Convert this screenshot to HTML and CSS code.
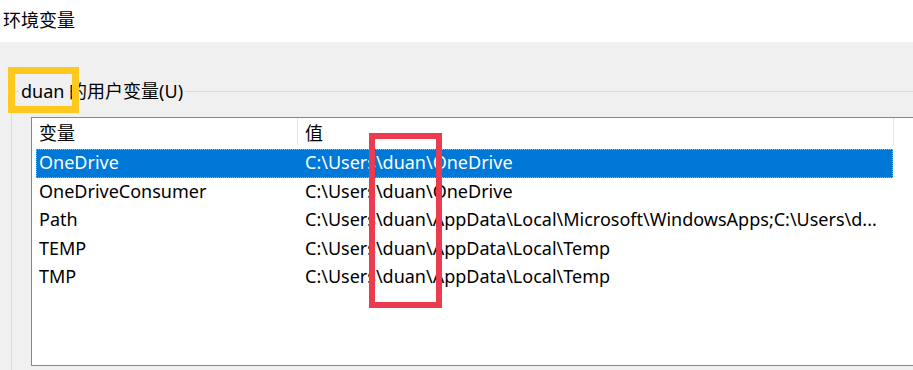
FILE: index.html
```html
<!DOCTYPE html>
<html lang="zh-CN">
<head>
<meta charset="utf-8">
<title>环境变量</title>
<link rel="stylesheet" href="styles.css">
</head>
<body>
<div class="titlebar">环境变量</div>
<div class="main">
  <div class="group">
    <div class="group-label">duan 的用户变量(U)</div>
    <div class="listbox">
      <div class="header">
        <div class="hcell c1">变量</div>
        <div class="hcell c2">值</div>
      </div>
      <div class="row selected"><div class="cell c1">OneDrive</div><div class="cell c2">C:\Users\duan\OneDrive</div></div>
      <div class="row"><div class="cell c1">OneDriveConsumer</div><div class="cell c2">C:\Users\duan\OneDrive</div></div>
      <div class="row"><div class="cell c1">Path</div><div class="cell c2">C:\Users\duan\AppData\Local\Microsoft\WindowsApps;C:\Users\d...</div></div>
      <div class="row"><div class="cell c1">TEMP</div><div class="cell c2">C:\Users\duan\AppData\Local\Temp</div></div>
      <div class="row"><div class="cell c1">TMP</div><div class="cell c2">C:\Users\duan\AppData\Local\Temp</div></div>
    </div>
  </div>
</div>
<div class="mark-yellow"></div>
<div class="mark-red"></div>
</body>
</html>
```

FILE: styles.css
```css
html, body {
  margin: 0;
  padding: 0;
  width: 913px;
  height: 370px;
  overflow: hidden;
  background: #f0f0f0;
  font-family: "Noto Sans", "Noto Sans CJK SC", sans-serif;
  color: #000;
}
body { position: relative; }

.titlebar {
  height: 42px;
  background: #fff;
  font-family: "Noto Sans CJK SC", sans-serif;
  font-size: 18px;
  line-height: 38px;
  padding-left: 3px;
  box-sizing: border-box;
}

.main {
  height: 328px;
  padding: 49px 0 0 11px;
  box-sizing: border-box;
}

.group {
  position: relative;
  border-top: 1px solid #dcdcdc;
  border-left: 1px solid #dcdcdc;
  height: 279px;
  padding: 25px 0 0 19px;
  box-sizing: border-box;
}

.group-label {
  position: absolute;
  left: 7px;
  top: -13px;
  padding: 0 2px;
  background: #f0f0f0;
  font-size: 18px;
  line-height: 24px;
  font-family: "Noto Sans", "Noto Sans CJK SC", sans-serif;
}

.listbox {
  width: 900px;
  height: 249px;
  background: #fff;
  border: 1px solid #828790;
  box-sizing: border-box;
  font-size: 18px;
}

.header {
  display: flex;
  height: 31px;
  width: 862px;
}
.hcell {
  font-family: "Noto Sans CJK SC", sans-serif;
  height: 27px;
  line-height: 29px;
  padding-left: 7px;
  box-sizing: border-box;
  border-right: 1px solid #e5e5e5;
}
.header .c1 { width: 266px; }
.header .c2 { flex: 1; }

.row {
  display: flex;
  height: 28.6px;
  line-height: 26.5px;
  margin-left: 4px;
  width: 857px;
  box-sizing: border-box;
  white-space: nowrap;
  font-family: "Noto Sans", sans-serif;
}
.cell { overflow: hidden; }
.row .c1 { width: 266px; padding-left: 3px; box-sizing: border-box; }
.row .c2 { flex: 1; padding-left: 3px; }

.row.selected {
  background: #0078d7;
  color: #fff;
  outline: 1px dotted #e8a050;
  outline-offset: -1px;
}

.mark-yellow {
  position: absolute;
  left: 8px;
  top: 67px;
  width: 71px;
  height: 46px;
  border: 7px solid #fdc91f;
  box-sizing: border-box;
}

.mark-red {
  position: absolute;
  left: 369px;
  top: 133px;
  width: 73px;
  height: 175px;
  border: 6px solid #ec3a4e;
  box-sizing: border-box;
}
```
